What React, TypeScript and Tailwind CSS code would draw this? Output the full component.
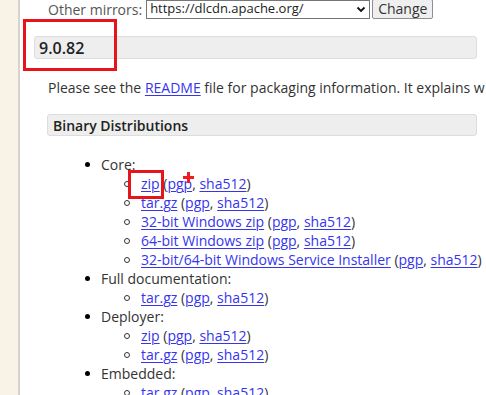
import React from 'react';

const L = ({ children }: { children: React.ReactNode }) => (
  <a href="#" className="text-[#3535ee] underline underline-offset-[2px] decoration-[1px]">
    {children}
  </a>
);

const Sub = ({ label }: { label: string }) => (
  <li className="flex items-center h-[19px] pl-[104px] whitespace-nowrap">
    <span className="w-[6px] h-[6px] rounded-full border-[1.5px] border-[#333] mr-[11px] shrink-0" />
    <span>
      <L>{label}</L> (<L>pgp</L>, <L>sha512</L>)
    </span>
  </li>
);

const Top = ({ label }: { label: string }) => (
  <li className="flex items-center h-[19px] pl-[65px] whitespace-nowrap">
    <span className="w-[5px] h-[5px] rounded-full bg-black mr-[11px] shrink-0" />
    <span>{label}</span>
  </li>
);

export default function App() {
  return (
    <div className="flex w-[486px] h-[395px] overflow-hidden bg-white font-['Open_Sans',sans-serif] text-[14px] text-[#333]">
      {/* beige page margin */}
      <div className="w-[18px] shrink-0 bg-[#f9f2e7]" />
      <div className="w-[2px] shrink-0 bg-[#d6d3ce]" />

      <main className="relative flex-1 min-w-0 overflow-hidden">
        {/* mirrors */}
        <div className="flex items-center pl-[28px] -mt-[1px] h-[20px] whitespace-nowrap">
          <span className="text-[#555] mr-[4px]">Other mirrors:</span>
          <div className="flex items-center justify-between w-[224px] h-[19px] border border-[#767676] px-[3px] text-[#222]">
            <span className="text-[13px]">https://dlcdn.apache.org/</span>
            <svg width="10" height="10" viewBox="0 0 10 10">
              <path d="M1.5 3.5 L5 7 L8.5 3.5" fill="none" stroke="#111" strokeWidth="1.8" />
            </svg>
          </div>
          <button className="ml-[2px] h-[20px] px-[5px] bg-[#efefef] border border-[#8f8f8f] rounded-[2px] text-[14px] text-[#333] leading-none">
            Change
          </button>
        </div>

        {/* version heading */}
        <div className="ml-[14px] mt-[17px] mr-[9px] h-[23px] flex items-center px-[4px] bg-[#eeeeee] border border-[#dddddd] rounded-[3px]">
          <span className="font-semibold text-[16px] text-[#222]">9.0.82</span>
        </div>

        <p className="pl-[28px] mt-[19px] whitespace-nowrap leading-[19px]">
          Please see the <L>README</L> file for packaging information. It explains w
        </p>

        {/* section heading */}
        <div className="ml-[27px] mt-[17px] mr-[9px] h-[22px] flex items-center px-[5px] bg-[#eeeeee] border border-[#dddddd] rounded-[3px]">
          <span className="font-semibold text-[14px] text-[#222]">Binary Distributions</span>
        </div>

        <ul className="mt-[19px]">
          <Top label="Core:" />
          <Sub label="zip" />
          <Sub label="tar.gz" />
          <Sub label="32-bit Windows zip" />
          <Sub label="64-bit Windows zip" />
          <Sub label="32-bit/64-bit Windows Service Installer" />
          <Top label="Full documentation:" />
          <Sub label="tar.gz" />
          <Top label="Deployer:" />
          <Sub label="zip" />
          <Sub label="tar.gz" />
          <Top label="Embedded:" />
          <Sub label="tar.gz" />
        </ul>

        {/* annotations */}
        <div className="absolute left-[3px] top-[19px] w-[94px] h-[52px] border-[3px] border-[#e8141c]" />
        <div className="absolute left-[108px] top-[170px] w-[36px] h-[29px] border-[3px] border-[#e8141c]" />
        <div className="absolute left-[163px] top-[172px] w-[11px] h-[11px]">
          <div className="absolute left-[4px] top-0 w-[2.5px] h-[11px] bg-[#ee1c24]" />
          <div className="absolute left-0 top-[4px] w-[11px] h-[2.5px] bg-[#ee1c24]" />
        </div>
      </main>
    </div>
  );
}
